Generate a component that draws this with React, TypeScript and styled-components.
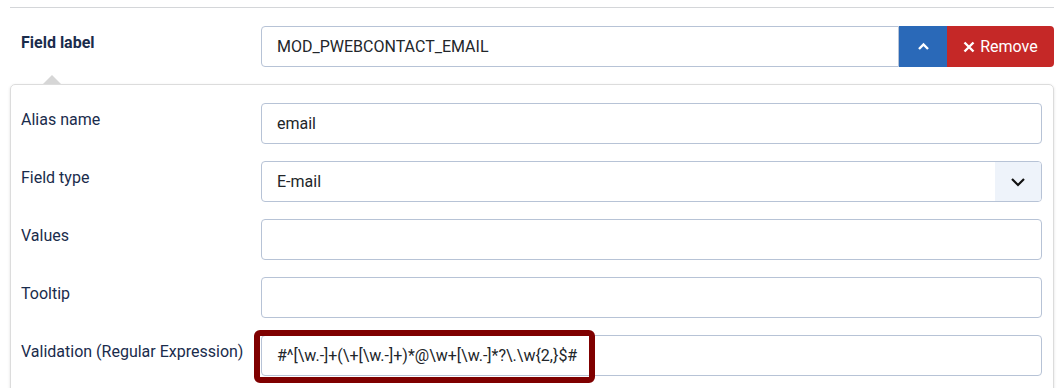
import React from "react";
import styled, { createGlobalStyle } from "styled-components";

const GlobalStyle = createGlobalStyle`
  body {
    margin: 0;
    background: #fff;
    font-family: Roboto, "Liberation Sans", sans-serif;
    font-size: 16px;
    color: #22262a;
  }
`;

const Page = styled.div`
  width: 1044px;
  padding: 7px 10px 0 10px;
`;

const Rule = styled.hr`
  margin: 0 0 18px 0;
  border: 0;
  border-top: 1px solid #d4d6d9;
`;

const Row = styled.div<{ $gap?: number }>`
  display: flex;
  align-items: flex-start;
  margin-bottom: ${(p) => p.$gap ?? 17}px;
`;

const Label = styled.div<{ $bold?: boolean; $w: number; $pad: number }>`
  width: ${(p) => p.$w}px;
  flex: none;
  padding: 5px 0 0 ${(p) => p.$pad}px;
  box-sizing: border-box;
  line-height: 24px;
  color: #1a2c4c;
  font-weight: ${(p) => (p.$bold ? 700 : 400)};
`;

const Control = styled.div`
  flex: 1;
  display: flex;
  position: relative;
`;

const Input = styled.div<{ $joined?: boolean }>`
  flex: 1;
  height: 41px;
  box-sizing: border-box;
  border: 1px solid #b7c3d6;
  border-radius: ${(p) => (p.$joined ? "4px 0 0 4px" : "4px")};
  padding: 0 15px;
  display: flex;
  align-items: center;
  font-size: 16px;
  color: #22262a;
  background: #fff;
`;

const SelectBox = styled(Input)`
  padding-right: 0;
  justify-content: space-between;
`;

const Caret = styled.div`
  width: 46px;
  height: 39px;
  background: #eef3fa;
  display: flex;
  align-items: center;
  justify-content: center;
  border-radius: 0 3px 3px 0;
`;

const Button = styled.div<{ $color: string; $w: number; $last?: boolean }>`
  width: ${(p) => p.$w}px;
  height: 41px;
  background: ${(p) => p.$color};
  color: #fff;
  display: flex;
  align-items: center;
  justify-content: center;
  gap: 5px;
  font-size: 16px;
  border-radius: ${(p) => (p.$last ? "0 4px 4px 0" : "0")};
`;

const Panel = styled.div`
  position: relative;
  border: 1px solid #dcdcdc;
  border-radius: 5px;
  box-shadow: 0 1px 3px rgba(0, 0, 0, 0.12);
  padding: 18px 11px 40px 0;
  &::before {
    content: "";
    position: absolute;
    top: -10px;
    left: 32px;
    border-left: 9px solid transparent;
    border-right: 9px solid transparent;
    border-bottom: 9px solid #d6d6d6;
  }
`;

const Highlight = styled.div`
  position: absolute;
  left: -7px;
  top: -5px;
  width: 341px;
  height: 53px;
  box-sizing: border-box;
  border: 6px solid #7f0000;
  border-radius: 6px;
  pointer-events: none;
`;

const ChevronDown = () => (
  <svg width="16" height="10" viewBox="0 0 16 10">
    <path d="M2 2l6 6 6-6" fill="none" stroke="#111" strokeWidth="2.2" />
  </svg>
);

const ChevronUp = () => (
  <svg width="13" height="9" viewBox="0 0 13 9">
    <path d="M2 7l4.5-4.5L11 7" fill="none" stroke="#fff" strokeWidth="2.4" />
  </svg>
);

const Cross = () => (
  <svg width="12" height="12" viewBox="0 0 12 12">
    <path d="M1.5 1.5l9 9M10.5 1.5l-9 9" stroke="#fff" strokeWidth="2.4" />
  </svg>
);

const fields = ["Alias name", "Field type", "Values", "Tooltip"];

export default function App() {
  return (
    <>
      <GlobalStyle />
      <Page>
        <Rule />
        <Row $gap={17}>
          <Label $bold $w={251} $pad={11}>
            Field label
          </Label>
          <Control>
            <Input $joined>MOD_PWEBCONTACT_EMAIL</Input>
            <Button $color="#2a69b8" $w={48}>
              <ChevronUp />
            </Button>
            <Button $color="#c52827" $w={107} $last>
              <Cross />
              Remove
            </Button>
          </Control>
        </Row>
        <Panel>
          {fields.map((name) => (
            <Row key={name}>
              <Label $w={250} $pad={10}>
                {name}
              </Label>
              <Control>
                {name === "Field type" ? (
                  <SelectBox>
                    E-mail
                    <Caret>
                      <ChevronDown />
                    </Caret>
                  </SelectBox>
                ) : (
                  <Input>{name === "Alias name" ? "email" : ""}</Input>
                )}
              </Control>
            </Row>
          ))}
          <Row>
            <Label $w={250} $pad={10}>
              Validation (Regular Expression)
            </Label>
            <Control>
              <Input>{"#^[\\w.-]+(\\+[\\w.-]+)*@\\w+[\\w.-]*?\\.\\w{2,}$#"}</Input>
              <Highlight />
            </Control>
          </Row>
        </Panel>
      </Page>
    </>
  );
}
